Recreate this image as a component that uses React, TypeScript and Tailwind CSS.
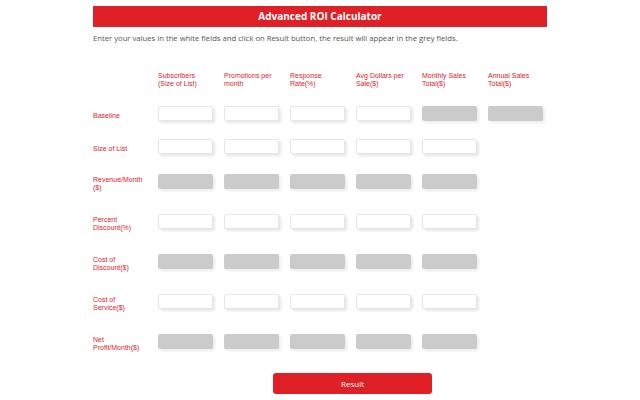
import React from 'react';

type Cell = 'w' | 'g' | null;

interface Row {
  label: string;
  mt: string;
  cells: Cell[];
}

const columns = [
  'Subscribers (Size of List)',
  'Promotions per month',
  'Response Rate(%)',
  'Avg Dollars per Sale($)',
  'Monthly Sales Total($)',
  'Annual Sales Total($)',
];

const rows: Row[] = [
  { label: 'Baseline', mt: 'mt-[18px]', cells: ['w', 'w', 'w', 'w', 'g', 'g'] },
  { label: 'Size of List', mt: 'mt-[18px]', cells: ['w', 'w', 'w', 'w', 'w', null] },
  { label: 'Revenue/Month ($)', mt: 'mt-[20px]', cells: ['g', 'g', 'g', 'g', 'g', null] },
  { label: 'Percent Discount(%)', mt: 'mt-[25px]', cells: ['w', 'w', 'w', 'w', 'w', null] },
  { label: 'Cost of Discount($)', mt: 'mt-[25px]', cells: ['g', 'g', 'g', 'g', 'g', null] },
  { label: 'Cost of Service($)', mt: 'mt-[25px]', cells: ['w', 'w', 'w', 'w', 'w', null] },
  { label: 'Net Profit/Month($)', mt: 'mt-[25px]', cells: ['g', 'g', 'g', 'g', 'g', null] },
];

function Field({ kind }: { kind: Cell }) {
  if (!kind) return null;
  if (kind === 'g') {
    return <div className="w-[55px] h-[15px] rounded-[2px] bg-[#cbcbcb] shadow-[2px_2px_3px_rgba(0,0,0,0.08)]" />;
  }
  return (
    <input
      type="text"
      className="block w-[55px] h-[15px] rounded-[2px] bg-white border border-[#e6e6e6] shadow-[2px_2px_3px_rgba(0,0,0,0.1)] outline-none"
    />
  );
}

export default function App() {
  return (
    <div className="w-[640px] h-[400px] bg-white overflow-hidden pt-[6px]">
      <div className="mx-auto w-[454px]">
        <div
          className="h-[21px] bg-[#df2127] text-white text-[10px] font-bold flex items-center justify-center"
          style={{ fontFamily: '"Open Sans", sans-serif' }}
        >
          Advanced ROI Calculator
        </div>
        <p
          className="mt-[5px] text-[7.7px] leading-[12px] text-[#555]"
          style={{ fontFamily: '"Open Sans", sans-serif' }}
        >
          Enter your values in the white fields and click on Result button, the result will appear in the grey fields.
        </p>

        <div className="text-[7px] leading-[8px] text-[#e0222b]" style={{ fontFamily: '"Liberation Sans", Arial, sans-serif' }}>
          <div className="flex mt-[28px]">
            <div className="w-[65px] shrink-0" />
            {columns.map(c => (
              <div key={c} className="w-[66px] shrink-0 pr-[13px]">{c}</div>
            ))}
          </div>

          {rows.map(r => (
            <div key={r.label} className={`flex items-center h-[15px] ${r.mt}`}>
              <div className="w-[65px] shrink-0 pr-[10px] pt-[5px]">{r.label}</div>
              {r.cells.map((c, i) => (
                <div key={i} className="w-[66px] shrink-0">
                  <Field kind={c} />
                </div>
              ))}
            </div>
          ))}
        </div>

        <div className="flex mt-[24px]">
          <div className="w-[65px] shrink-0" />
          <div className="flex-1 flex justify-center">
            <button
              className="w-[159px] h-[21px] rounded-[3px] bg-[#df2127] text-white text-[8px]"
              style={{ fontFamily: '"Open Sans", sans-serif' }}
            >
              Result
            </button>
          </div>
        </div>
      </div>
    </div>
  );
}
